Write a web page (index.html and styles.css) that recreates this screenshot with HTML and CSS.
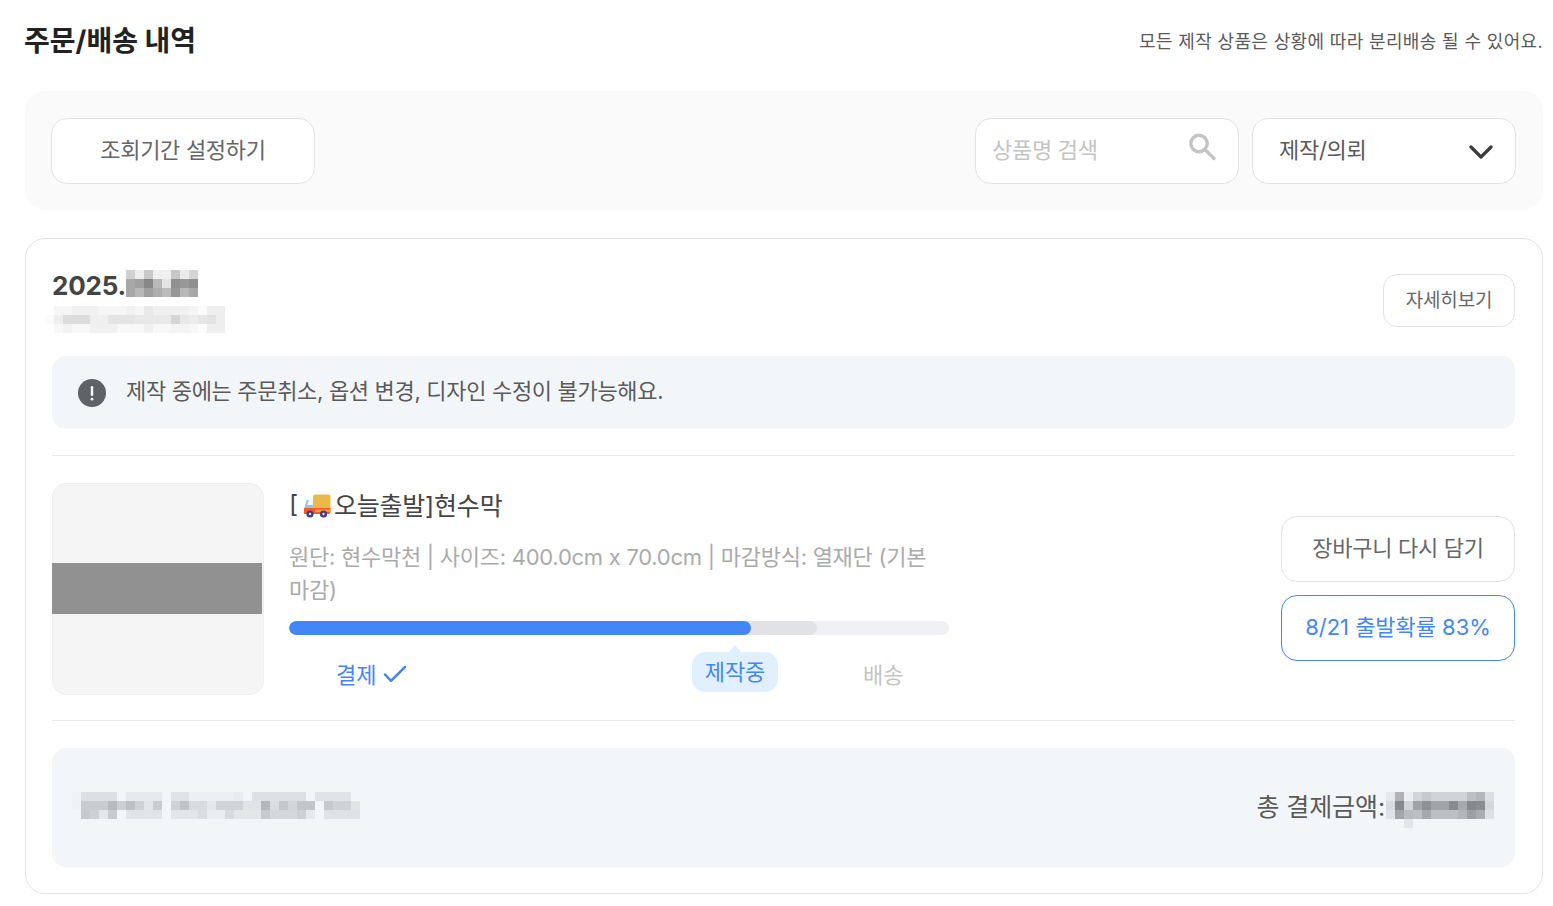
FILE: index.html
```html
<!DOCTYPE html>
<html lang="ko">
<head>
<meta charset="utf-8">
<title>주문/배송 내역</title>
<link rel="stylesheet" href="styles.css">
</head>
<body>
<main class="page">
  <header class="page-head">
    <h1 class="page-title">주문/배송 내역</h1>
    <p class="page-note">모든 제작 상품은 상황에 따라 분리배송 될 수 있어요.</p>
  </header>

  <section class="filter-bar">
    <button class="field field-period">조회기간 설정하기</button>
    <div class="filter-right">
      <div class="field field-search">
        <span class="placeholder">상품명 검색</span>
        <svg class="icon-search" width="28" height="28" viewBox="0 0 28 28" fill="none" stroke="#c4c4c4" stroke-width="3.4"><circle cx="11" cy="10.5" r="8.2"/><path d="M17 16.5l9 9" stroke-linecap="round"/></svg>
      </div>
      <div class="field field-select">
        <span>제작/의뢰</span>
        <svg class="icon-chevron" width="24" height="14" viewBox="0 0 24 14" fill="none" stroke="#3c3c3c" stroke-width="3.2"><path d="M2 2l10 10L22 2" stroke-linecap="round" stroke-linejoin="round"/></svg>
      </div>
    </div>
  </section>

  <article class="order">
    <div class="order-head">
      <div class="order-id">
        <div class="order-date">
          <span class="date-text">2025.</span>
          <svg class="mosaic" width="72" height="27" viewBox="0 0 8 3" shape-rendering="crispEdges">
            <rect x="0" y="0" width="1" height="1" fill="#d0d0d0"/><rect x="1" y="0" width="1" height="1" fill="#eeeeee"/><rect x="2" y="0" width="1" height="1" fill="#c8c8c8"/><rect x="3" y="0" width="1" height="1" fill="#f0f0f0"/><rect x="4" y="0" width="1" height="1" fill="#f0f0f0"/><rect x="5" y="0" width="1" height="1" fill="#c8c8c8"/><rect x="6" y="0" width="1" height="1" fill="#eaeaea"/><rect x="7" y="0" width="1" height="1" fill="#d4d4d4"/>
            <rect x="0" y="1" width="1" height="1" fill="#a8a8a8"/><rect x="1" y="1" width="1" height="1" fill="#a0a0a0"/><rect x="2" y="1" width="1" height="1" fill="#888888"/><rect x="3" y="1" width="1" height="1" fill="#b8b8b8"/><rect x="4" y="1" width="1" height="1" fill="#e4e4e4"/><rect x="5" y="1" width="1" height="1" fill="#909090"/><rect x="6" y="1" width="1" height="1" fill="#989898"/><rect x="7" y="1" width="1" height="1" fill="#909090"/>
            <rect x="0" y="2" width="1" height="1" fill="#a8a8a8"/><rect x="1" y="2" width="1" height="1" fill="#b8b8b8"/><rect x="2" y="2" width="1" height="1" fill="#a0a0a0"/><rect x="3" y="2" width="1" height="1" fill="#aeaeae"/><rect x="4" y="2" width="1" height="1" fill="#bcbcbc"/><rect x="5" y="2" width="1" height="1" fill="#989898"/><rect x="6" y="2" width="1" height="1" fill="#b8b8b8"/><rect x="7" y="2" width="1" height="1" fill="#a8a8a8"/>
          </svg>
        </div>
        <svg class="mosaic mosaic-sub" width="180" height="27" viewBox="0 0 20 3" shape-rendering="crispEdges">
          <rect x="1" y="0" width="19" height="1" fill="#f6f6f6"/>
          <rect x="3" y="0" width="3" height="1" fill="#f1f1f1"/><rect x="9" y="0" width="1" height="1" fill="#f1f1f1"/><rect x="11" y="0" width="1" height="1" fill="#e9e9e9"/><rect x="12" y="0" width="4" height="1" fill="#f0f0f0"/><rect x="16" y="0" width="1" height="1" fill="#f5f5f5"/><rect x="17" y="0" width="1" height="1" fill="#fbfbfb"/><rect x="18" y="0" width="2" height="1" fill="#eeeeee"/>
          <rect x="0" y="1" width="1" height="1" fill="#fbfbfb"/><rect x="1" y="1" width="1" height="1" fill="#eeeeee"/>
          <rect x="2" y="1" width="3" height="1" fill="#dcdcdc"/><rect x="5" y="1" width="2" height="1" fill="#efefef"/><rect x="7" y="1" width="3" height="1" fill="#e4e4e4"/><rect x="10" y="1" width="2" height="1" fill="#e8e8e8"/><rect x="12" y="1" width="2" height="1" fill="#e9e9e9"/><rect x="14" y="1" width="1" height="1" fill="#d5d5d5"/><rect x="15" y="1" width="1" height="1" fill="#e8e8e8"/><rect x="16" y="1" width="1" height="1" fill="#ececec"/><rect x="17" y="1" width="1" height="1" fill="#e6e6e6"/><rect x="18" y="1" width="1" height="1" fill="#e2e2e2"/><rect x="19" y="1" width="1" height="1" fill="#eeeeee"/>
          <rect x="1" y="2" width="16" height="1" fill="#f8f8f8"/><rect x="2" y="2" width="1" height="1" fill="#f3f3f3"/><rect x="5" y="2" width="3" height="1" fill="#f1f1f1"/><rect x="11" y="2" width="1" height="1" fill="#f0f0f0"/><rect x="14" y="2" width="2" height="1" fill="#f4f4f4"/><rect x="17" y="2" width="1" height="1" fill="#fdfdfd"/><rect x="18" y="2" width="2" height="1" fill="#efefef"/>
        </svg>
      </div>
      <button class="btn-detail">자세히보기</button>
    </div>

    <div class="notice">
      <svg width="28" height="28" viewBox="0 0 28 28"><circle cx="14" cy="14" r="14" fill="#5f6266"/><rect x="12.8" y="7" width="2.4" height="10" rx="1.2" fill="#fff"/><circle cx="14" cy="20.2" r="1.4" fill="#fff"/></svg>
      <span>제작 중에는 주문취소, 옵션 변경, 디자인 수정이 불가능해요.</span>
    </div>

    <div class="item">
      <div class="thumb"><div class="thumb-band"></div></div>
      <div class="item-main">
        <h2 class="item-title">
          <span>[</span>
          <svg class="truck" width="28" height="24" viewBox="0 0 28 24">
            <rect x="10" y="0.5" width="17.5" height="16" rx="2.5" fill="#e9b949"/>
            <path d="M3 8a2 2 0 0 1 2-2h5v9H1z" fill="#8fc7ea"/>
            <path d="M6 6h4v5H4z" fill="#f1f6fa"/>
            <path d="M1 14h26.5v4a2 2 0 0 1-2 2H1z" fill="#f2592f"/>
            <rect x="12" y="15.5" width="15.5" height="2.5" fill="#f79a3a"/>
            <circle cx="7" cy="20" r="3.6" fill="#4a3a78"/><circle cx="7" cy="20" r="1.2" fill="#e8e0f2"/>
            <circle cx="20.5" cy="20" r="3.6" fill="#4a3a78"/><circle cx="20.5" cy="20" r="1.2" fill="#e8e0f2"/>
          </svg>
          <span>오늘출발]현수막</span>
        </h2>
        <p class="item-options">원단: 현수막천 | 사이즈: 400.0cm x 70.0cm | 마감방식: 열재단 (기본 마감)</p>
        <div class="progress">
          <div class="progress-mid"></div>
          <div class="progress-fill"></div>
        </div>
        <div class="steps">
          <div class="step step-done">
            <span>결제</span>
            <svg class="icon-check" width="24" height="18" viewBox="0 0 24 18" fill="none" stroke="#4287f5" stroke-width="2.5"><path d="M2 9.5l6 6.3L22 2" stroke-linecap="round" stroke-linejoin="round"/></svg>
          </div>
          <div class="step step-current">제작중</div>
          <div class="step step-next">배송</div>
        </div>
      </div>
      <div class="item-actions">
        <button class="btn-action">장바구니 다시 담기</button>
        <button class="btn-action btn-primary">8/21 출발확률 83%</button>
      </div>
    </div>

    <footer class="order-foot">
      <svg class="mosaic mosaic-foot" width="288" height="27" viewBox="0 0 32 3" shape-rendering="crispEdges">
        <rect x="0" y="0" width="1" height="1" fill="#f0f2f5"/><rect x="0" y="1" width="1" height="1" fill="#eff1f4"/>
        <rect x="1" y="0" width="4" height="1" fill="#dcdfe3"/><rect x="6" y="0" width="4" height="1" fill="#e6e9ed"/><rect x="11" y="0" width="2" height="1" fill="#e0e4e8"/><rect x="13" y="0" width="5" height="1" fill="#eceff3"/><rect x="18" y="0" width="1" height="1" fill="#e8ebef"/><rect x="20" y="0" width="6" height="1" fill="#dde1e6"/><rect x="27" y="0" width="4" height="1" fill="#e0e3e7"/>
        <rect x="1" y="1" width="3" height="1" fill="#c8cbcf"/><rect x="4" y="1" width="1" height="1" fill="#b8bcc1"/><rect x="5" y="1" width="1" height="1" fill="#cdd0d4"/><rect x="6" y="1" width="1" height="1" fill="#bcc0c4"/><rect x="7" y="1" width="1" height="1" fill="#ced1d5"/><rect x="8" y="1" width="1" height="1" fill="#e2e5e9"/><rect x="9" y="1" width="1" height="1" fill="#c8ccd0"/><rect x="11" y="1" width="1" height="1" fill="#ced2d6"/><rect x="12" y="1" width="1" height="1" fill="#bfc3c7"/><rect x="13" y="1" width="2" height="1" fill="#d8dce0"/><rect x="15" y="1" width="1" height="1" fill="#e4e7eb"/><rect x="16" y="1" width="3" height="1" fill="#d0d4d8"/><rect x="19" y="1" width="2" height="1" fill="#e2e4e8"/><rect x="21" y="1" width="1" height="1" fill="#b4b7bb"/><rect x="22" y="1" width="1" height="1" fill="#dadde1"/><rect x="23" y="1" width="1" height="1" fill="#c4c7cb"/><rect x="24" y="1" width="1" height="1" fill="#d4d6da"/><rect x="25" y="1" width="2" height="1" fill="#c2c6ca"/><rect x="28" y="1" width="1" height="1" fill="#c6cace"/><rect x="29" y="1" width="2" height="1" fill="#cfd2d6"/><rect x="31" y="1" width="1" height="1" fill="#e2e4e8"/>
        <rect x="1" y="2" width="1" height="1" fill="#c6cace"/><rect x="2" y="2" width="1" height="1" fill="#cdd0d4"/><rect x="3" y="2" width="1" height="1" fill="#e4e8ec"/><rect x="4" y="2" width="1" height="1" fill="#c8ccd0"/><rect x="6" y="2" width="4" height="1" fill="#e0e3e7"/><rect x="11" y="2" width="2" height="1" fill="#e2e5e9"/><rect x="13" y="2" width="1" height="1" fill="#e4e5ea"/><rect x="14" y="2" width="1" height="1" fill="#dadde1"/><rect x="15" y="2" width="2" height="1" fill="#eaedf1"/><rect x="17" y="2" width="1" height="1" fill="#d8dade"/><rect x="18" y="2" width="3" height="1" fill="#e4e7ea"/><rect x="21" y="2" width="1" height="1" fill="#c8cace"/><rect x="22" y="2" width="3" height="1" fill="#d4d7db"/><rect x="25" y="2" width="1" height="1" fill="#cdd1d5"/><rect x="26" y="2" width="1" height="1" fill="#e6e9ed"/><rect x="28" y="2" width="4" height="1" fill="#dee1e5"/>
      </svg>
      <div class="total">
        <span class="total-label">총 결제금액:</span>
        <svg class="mosaic mosaic-total" width="108" height="36" viewBox="0 0 12 4" shape-rendering="crispEdges">
          <rect x="0" y="0" width="1" height="1" fill="#e6e9ec"/><rect x="1" y="0" width="1" height="1" fill="#b0b2b6"/><rect x="2" y="0" width="1" height="1" fill="#eceef1"/><rect x="3" y="0" width="1" height="1" fill="#d2d5d9"/><rect x="4" y="0" width="1" height="1" fill="#c6c9cd"/><rect x="5" y="0" width="3" height="1" fill="#d0d3d7"/><rect x="8" y="0" width="1" height="1" fill="#d0d3d7"/><rect x="9" y="0" width="1" height="1" fill="#bcbfc3"/><rect x="10" y="0" width="1" height="1" fill="#b4b7bb"/><rect x="11" y="0" width="1" height="1" fill="#dce0e4"/>
          <rect x="0" y="1" width="1" height="1" fill="#d8dbdf"/><rect x="1" y="1" width="1" height="1" fill="#86898d"/><rect x="2" y="1" width="1" height="1" fill="#d2d4d8"/><rect x="3" y="1" width="1" height="1" fill="#a0a3a7"/><rect x="4" y="1" width="1" height="1" fill="#8e9195"/><rect x="5" y="1" width="2" height="1" fill="#a0a3a7"/><rect x="7" y="1" width="1" height="1" fill="#888b8f"/><rect x="8" y="1" width="1" height="1" fill="#a6a9ad"/><rect x="9" y="1" width="1" height="1" fill="#85888c"/><rect x="10" y="1" width="1" height="1" fill="#8a8d91"/><rect x="11" y="1" width="1" height="1" fill="#d4d7db"/>
          <rect x="0" y="2" width="1" height="1" fill="#dfe2e6"/><rect x="1" y="2" width="1" height="1" fill="#a2a5a9"/><rect x="2" y="2" width="1" height="1" fill="#b8bbbf"/><rect x="3" y="2" width="1" height="1" fill="#bcbfc3"/><rect x="4" y="2" width="1" height="1" fill="#a6a9ad"/><rect x="5" y="2" width="3" height="1" fill="#bcbfc3"/><rect x="8" y="2" width="1" height="1" fill="#b2b5b9"/><rect x="9" y="2" width="1" height="1" fill="#9c9fa3"/><rect x="10" y="2" width="1" height="1" fill="#aaadb1"/><rect x="11" y="2" width="1" height="1" fill="#dde0e4"/>
          <rect x="2" y="3" width="1" height="1" fill="#e2e5e9"/>
        </svg>
      </div>
    </footer>
  </article>
</main>
</body>
</html>
```

FILE: styles.css
```css
* { box-sizing: border-box; }
html, body { margin: 0; background: #fff; }
body {
  font-family: Inter, "Noto Sans CJK KR", "Noto Sans", sans-serif;
  color: #444;
  height: 906px;
  overflow: hidden;
}
button { font: inherit; background: #fff; cursor: pointer; }
h1, h2, p { margin: 0; }

.page { padding: 0 10px 0 25px; }

.page-head {
  height: 91px;
  display: flex;
  justify-content: space-between;
  align-items: center;
  padding-bottom: 14px;
}
.page-title { font-size: 28px; font-weight: 700; color: #222; letter-spacing: 0; margin-left: -1px; }
.page-note { font-size: 18px; color: #5a5a5a; letter-spacing: 0.35px; padding-top: 2px; }

.filter-bar {
  height: 119px;
  background: #fafafa;
  border-radius: 20px;
  padding: 27px 27px 26px 26px;
  display: flex;
  justify-content: space-between;
}
.filter-right { display: flex; gap: 13px; }
.field {
  width: 264px;
  height: 66px;
  background: #fff;
  border: 1px solid #e3e3e3;
  border-radius: 16px;
  font-size: 22px;
  letter-spacing: -0.3px;
  color: #666;
}
.field-period { padding: 0 0 6px; }
.field-search, .field-select { display: flex; align-items: center; justify-content: space-between; }
.field-search span, .field-select span { margin-bottom: 6px; }
.field-search { padding: 0 22px 0 16px; }
.placeholder { color: #c4c4c4; }
.icon-search { margin-top: -8px; }
.field-select { padding: 0 22px 0 26px; color: #5a5a5a; }
.icon-chevron { margin-top: 2px; }

.order {
  margin-top: 28px;
  height: 656px;
  border: 1px solid #e3e3e3;
  border-radius: 20px;
  padding: 35px 27px 26px 26px;
}
.order-head { display: flex; justify-content: space-between; height: 82px; }
.order-date { display: flex; align-items: center; font-size: 26px; font-weight: 700; color: #444; letter-spacing: -0.2px; height: 27px; margin-top: -4px; }
.date-text { padding-top: 4px; }
.mosaic { display: block; flex: none; }
.mosaic-sub { margin-top: 9px; margin-left: -7px; }
.btn-detail {
  width: 132px;
  height: 53px;
  border: 1px solid #e3e3e3;
  border-radius: 14px;
  font-size: 19px;
  letter-spacing: -0.2px;
  color: #666;
  padding: 0 0 4px;
}

.notice {
  height: 73px;
  background: #f3f6f9;
  border-radius: 14px;
  display: flex;
  align-items: center;
  gap: 20px;
  padding-left: 26px;
  font-size: 22px;
  letter-spacing: -0.32px;
  color: #5a5a5a;
}
.notice span { margin-bottom: 7px; }

.item {
  margin-top: 26px;
  height: 266px;
  border-top: 1px solid #e8e8e8;
  border-bottom: 1px solid #e8e8e8;
  padding-top: 27px;
  display: flex;
}
.thumb {
  width: 212px;
  height: 212px;
  background: #f5f5f5;
  border: 1px solid #eeeeee;
  border-radius: 14px;
  display: flex;
  align-items: center;
  flex: none;
}
.thumb-band { width: 210px; height: 51px; background: #919191; margin: -2px 0 0 -1px; flex: none; }
.item-main { width: 660px; margin-left: 25px; }
.item-title { font-size: 25px; font-weight: 400; color: #444; letter-spacing: -0.2px; display: flex; align-items: center; height: 46px; margin-top: -2px; }
.truck { margin: 4px 3px 0 5px; }
.item-options { font-size: 22px; line-height: 33px; color: #aaa; letter-spacing: -0.26px; margin-top: 14px; width: 645px; }
.progress { position: relative; height: 14px; margin-top: 14px; background: #eef0f3; border-radius: 7px; overflow: hidden; }
.progress-mid { position: absolute; left: 0; top: 0; bottom: 0; width: 528px; background: #e0e2e6; border-radius: 7px; }
.progress-fill { position: absolute; left: 0; top: 0; bottom: 0; width: 462px; background: #4287f5; border-radius: 7px; }
.steps { position: relative; height: 40px; margin-top: 17px; font-size: 22px; letter-spacing: -0.1px; }
.step { position: absolute; top: 0; height: 40px; display: flex; align-items: center; }
.step-done { left: 47px; gap: 7px; color: #4287f5; padding-top: 1px; }
.icon-check { margin-top: 3px; }
.step-current {
  left: 403px;
  width: 86px;
  justify-content: center;
  background: #e1f0ff;
  border-radius: 13px;
  color: #4287f5;
  padding-bottom: 4px;
}
.step-current::before {
  content: "";
  position: absolute;
  top: -7px;
  left: 36px;
  border-left: 7px solid transparent;
  border-right: 7px solid transparent;
  border-bottom: 8px solid #e1f0ff;
}
.step-next { left: 574px; color: #c4c4c4; padding-top: 1px; }

.item-actions { margin-left: auto; display: flex; flex-direction: column; gap: 13px; padding-top: 33px; }
.btn-action {
  width: 234px;
  height: 66px;
  border: 1px solid #e3e3e3;
  border-radius: 16px;
  font-size: 22px;
  letter-spacing: -0.3px;
  color: #666;
  padding: 0 0 6px;
}
.btn-primary { border-color: #4287f5; color: #4287f5; letter-spacing: -0.04px; }

.order-foot {
  margin-top: 27px;
  height: 119px;
  background: #f3f6f9;
  border-radius: 14px;
  display: flex;
  justify-content: space-between;
  align-items: center;
  padding: 0 21px 0 20px;
}
.mosaic-foot { margin-top: -4px; }
.total { display: flex; align-items: center; font-size: 25px; letter-spacing: -0.1px; color: #5a5a5a; }
.total-label { margin-bottom: 6px; }
.mosaic-total { margin: 5px 0 0 1px; }
```
